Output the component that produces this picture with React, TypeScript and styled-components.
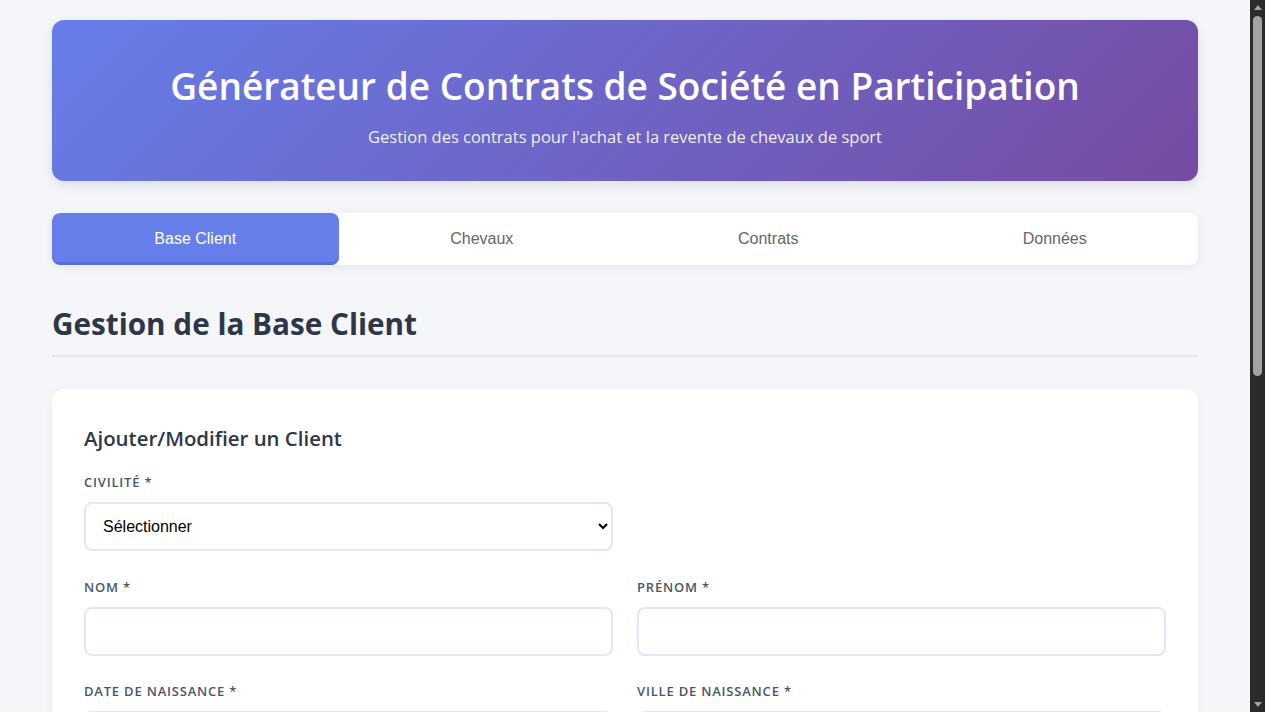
import React from "react";
import styled, { createGlobalStyle } from "styled-components";

const GlobalStyle = createGlobalStyle`
  * { box-sizing: border-box; }
  body {
    margin: 0;
    padding-right: 15px;
    background: #f4f6fa;
    font-family: "Open Sans", "Noto Sans", sans-serif;
    color: #2d3748;
  }
`;

const Container = styled.div`
  max-width: 1146px;
  margin: 0 auto;
  padding: 20px 0 40px;
`;

const Header = styled.header`
  background: linear-gradient(135deg, #667eea 0%, #764ba2 100%);
  color: #fff;
  border-radius: 12px;
  padding: 44px 20px 0;
  text-align: center;
  box-shadow: 0 4px 12px rgba(0, 0, 0, 0.1);
  height: 161px;
`;

const Title = styled.h1`
  margin: 0 0 18px;
  font-size: 37px;
  font-weight: 600;
  line-height: 44px;
`;

const Subtitle = styled.p`
  margin: 0;
  font-size: 16.5px;
  line-height: 22px;
  opacity: 0.9;
`;

const Tabs = styled.nav`
  display: grid;
  grid-template-columns: repeat(4, 1fr);
  margin-top: 32px;
  background: #fff;
  border-radius: 8px;
  box-shadow: 0 2px 8px rgba(0, 0, 0, 0.08);
  overflow: hidden;
`;

const Tab = styled.button<{ $active?: boolean }>`
  height: 52px;
  border: none;
  border-radius: 8px;
  font-family: "Liberation Sans", Arial, sans-serif;
  font-size: 16px;
  cursor: pointer;
  background: ${(p) => (p.$active ? "#667eea" : "transparent")};
  color: ${(p) => (p.$active ? "#fff" : "#666")};
  box-shadow: ${(p) => (p.$active ? "inset 0 -3px 0 #5a6fd6" : "none")};
`;

const SectionTitle = styled.h2`
  margin: 39px 0 32px;
  padding-bottom: 11px;
  font-size: 29.7px;
  font-weight: 700;
  color: #2d3748;
  border-bottom: 2px solid #e2e8f0;
  line-height: 1.35;
`;

const Card = styled.section`
  background: #fff;
  border-radius: 12px;
  padding: 35px 32px 32px;
  box-shadow: 0 2px 10px rgba(0, 0, 0, 0.05);
`;

const CardTitle = styled.h3`
  margin: 0 0 20px;
  font-size: 20.4px;
  font-weight: 600;
  color: #2d3748;
`;

const FormGrid = styled.div`
  display: grid;
  grid-template-columns: 1fr 1fr;
  column-gap: 24px;
  row-gap: 25px;
  margin-bottom: 26px;
`;

const Field = styled.div`
  display: flex;
  flex-direction: column;
`;

const Label = styled.label`
  font-size: 13px;
  font-weight: 600;
  text-transform: uppercase;
  letter-spacing: 0.8px;
  color: #4a5568;
  line-height: 20px;
  margin-bottom: 10px;
`;

const Input = styled.input`
  height: 49px;
  border: 2px solid #e2e8f0;
  border-radius: 8px;
  padding: 0 16px;
  font-family: "Liberation Sans", Arial, sans-serif;
  font-size: 16px;
  background: #fff;
`;

const Select = styled.select`
  height: 49px;
  border: 2px solid #e2e8f0;
  border-radius: 8px;
  padding: 0 12px 0 13px;
  font-family: "Liberation Sans", Arial, sans-serif;
  font-size: 16px;
  color: #000;
  background: #fff;
`;

const ScrollBar = styled.div`
  position: fixed;
  top: 0;
  right: 0;
  width: 15px;
  height: 100vh;
  background: #2b2b2b;
  display: flex;
  flex-direction: column;
  align-items: center;
  justify-content: space-between;
  padding: 3px 0;
`;

const Arrow = styled.div<{ $down?: boolean }>`
  width: 0;
  height: 0;
  border-left: 4px solid transparent;
  border-right: 4px solid transparent;
  ${(p) =>
    p.$down
      ? "border-top: 5px solid #a3a3a3;"
      : "border-bottom: 5px solid #a3a3a3;"}
  margin: 2px 0;
`;

const Thumb = styled.div`
  width: 9px;
  height: 360px;
  border-radius: 5px;
  background: #a3a3a3;
  margin-top: 4px;
  margin-bottom: auto;
`;

export default function App() {
  return (
    <>
      <GlobalStyle />
      <Container>
        <Header>
          <Title>Générateur de Contrats de Société en Participation</Title>
          <Subtitle>Gestion des contrats pour l'achat et la revente de chevaux de sport</Subtitle>
        </Header>
        <Tabs>
          <Tab $active>Base Client</Tab>
          <Tab>Chevaux</Tab>
          <Tab>Contrats</Tab>
          <Tab>Données</Tab>
        </Tabs>
        <SectionTitle>Gestion de la Base Client</SectionTitle>
        <Card>
          <CardTitle>Ajouter/Modifier un Client</CardTitle>
          <FormGrid>
            <Field>
              <Label>Civilité *</Label>
              <Select defaultValue="">
                <option value="">Sélectionner</option>
                <option value="M">Monsieur</option>
                <option value="Mme">Madame</option>
              </Select>
            </Field>
          </FormGrid>
          <FormGrid>
            <Field>
              <Label>Nom *</Label>
              <Input type="text" />
            </Field>
            <Field>
              <Label>Prénom *</Label>
              <Input type="text" />
            </Field>
            <Field>
              <Label>Date de naissance *</Label>
              <Input type="text" />
            </Field>
            <Field>
              <Label>Ville de naissance *</Label>
              <Input type="text" />
            </Field>
            <Field>
              <Label>Adresse *</Label>
              <Input type="text" />
            </Field>
            <Field>
              <Label>Code postal *</Label>
              <Input type="text" />
            </Field>
          </FormGrid>
        </Card>
      </Container>
      <ScrollBar aria-hidden>
        <Arrow />
        <Thumb />
        <Arrow $down />
      </ScrollBar>
    </>
  );
}
